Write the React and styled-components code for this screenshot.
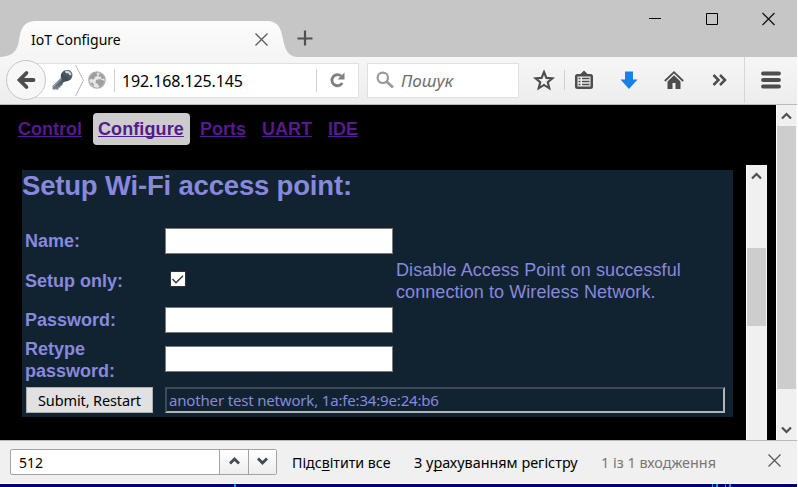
import React from 'react';
import styled, { createGlobalStyle, css } from 'styled-components';

const Global = createGlobalStyle`
  * { box-sizing: border-box; }
  body { margin: 0; background: #fff; overflow: hidden; }
`;

const ui = '"Noto Sans", "Open Sans", sans-serif';
const arial = '"Liberation Sans", Arial, sans-serif';

const Window = styled.div`
  display: flex;
  flex-direction: column;
  width: 797px;
  height: 487px;
  overflow: hidden;
`;

const TitleBar = styled.header`
  display: flex;
  height: 57px;
  background: #c6c6c6;
`;

const Tab = styled.div`
  display: grid;
  width: 297px;
  height: 57px;
  flex: none;
  > * { grid-area: 1 / 1; }
`;

const TabContent = styled.div`
  display: flex;
  align-items: center;
  justify-content: space-between;
  padding: 22px 29px 0 31px;
  height: 57px;
`;

const Label = styled.span`
  font-family: ${ui};
  font-size: ${p => p.$size || 14}px;
  font-weight: 400;
  letter-spacing: ${p => p.$spacing || 0}px;
  font-style: ${p => (p.$italic ? 'italic' : 'normal')};
  color: ${p => p.$color || '#000'};
  padding-top: ${p => p.$drop || 0}px;
  white-space: pre;
  line-height: 20px;
  u { text-decoration: underline; text-underline-offset: 2px; text-decoration-skip-ink: none; }
`;

const NewTab = styled.div`
  padding: 30px 0 0 0;
  flex: 1;
`;

const WindowControls = styled.div`
  display: flex;
  gap: 43px;
  padding: 12px 21px 0 0;
`;

const Icon = styled.svg`
  display: block;
  flex: none;
`;

const Toolbar = styled.nav`
  display: flex;
  align-items: center;
  height: 48px;
  padding: 0 0 1px 6px;
  background: linear-gradient(#f6f6f6, #ededed);
  border-bottom: 1px solid #bababa;
`;

const BackButton = styled.div`
  display: grid;
  place-items: center;
  flex: none;
  width: 40px;
  height: 40px;
  border: 1px solid #c6c6c6;
  border-radius: 50%;
  background: #f7f7f7;
  z-index: 1;
`;

const AddressBar = styled.div`
  display: flex;
  align-items: center;
  flex: none;
  width: 333px;
  height: 35px;
  margin-left: -20px;
  padding-left: 25px;
  background: #fff;
  border: 1px solid #e0e0e0;
`;

const Divider = styled.span`
  flex: none;
  width: 1px;
  height: ${p => p.$h}px;
  background: ${p => p.$color || '#cfcfcf'};
  margin: 0 ${p => p.$right || 0}px 0 ${p => p.$left || 0}px;
`;

const SearchBox = styled(AddressBar)`
  width: 152px;
  margin-left: 8px;
  padding-left: 8px;
  gap: 7px;
`;

const ToolSlot = styled.div`
  display: grid;
  place-items: center;
  flex: none;
  width: ${p => p.$w}px;
  height: 46px;
  padding-left: ${p => p.$shift || 0}px;
`;

const Content = styled.main`
  display: flex;
  height: 335px;
  background: #000;
`;

const Page = styled.div`
  flex: 1;
  display: flex;
  flex-direction: column;
`;

const Nav = styled.nav`
  display: flex;
  gap: 6px;
  height: 60px;
  padding: 8px 0 0 13px;
`;

const NavLink = styled.a`
  height: 32px;
  padding: 0 5px;
  border-radius: 4px;
  font: bold 18px/32px ${arial};
  color: #551a8b;
  text-decoration: underline;
  text-decoration-skip-ink: none;
  ${p => p.$active && css`
    margin-right: -1px;
    padding-right: 6px;
    background: #ccc;
    letter-spacing: 0.1px;
  `}
`;

const Frame = styled.section`
  display: flex;
  justify-content: space-between;
  flex: 1;
  padding: 0 9px 0 22px;
`;

const Panel = styled.div`
  width: 711px;
  height: 247px;
  margin-top: 5px;
  background: #112231;
  color: #8888dd;
`;

const Heading = styled.h1`
  margin: 0;
  height: 56px;
  font: bold 27.5px/31px ${arial};
  letter-spacing: -0.18px;
`;

const FormGrid = styled.div`
  display: grid;
  grid-template-columns: 140px 231px 1fr;
  grid-template-rows: 30px 50px 28px 50px 32px;
  align-items: center;
  padding-left: 3px;
`;

const FieldLabel = styled.label`
  grid-column: 1;
  font: bold 18px/22px ${arial};
  padding-top: ${p => p.$drop || 0}px;
`;

const Field = styled.div`
  width: 228px;
  height: 26px;
  background: #fff;
  border: 1px solid #7a7a7a;
`;

const Checkbox = styled.div`
  width: 16px;
  height: 16px;
  margin: -4px 0 0 5px;
  background: #fff;
  border: 1px solid #333;
`;

const Hint = styled.p`
  margin: 0;
  font: 18px/22px ${arial};
  letter-spacing: 0.08px;
  white-space: pre;
`;

const Submit = styled.div`
  display: grid;
  place-items: center;
  grid-column: 1;
  width: 127px;
  height: 26px;
  margin-left: 1px;
  background: #e1e1e1;
  border: 1px solid #adadad;
`;

const Output = styled.div`
  display: flex;
  align-items: center;
  grid-column: 2 / 4;
  width: 560px;
  height: 26px;
  padding-left: 2px;
  border: 2px solid;
  border-color: #3e4a57 #b0b5b9 #b0b5b9 #3e4a57;
`;

const ScrollBar = styled.div`
  display: flex;
  flex-direction: column;
  flex: none;
  align-items: center;
  width: 21px;
  background: #f0f0f0;
  border-left: 1px solid #fff;
  border-right: 1px solid #f6f6f6;
`;

const ScrollArrow = styled.div`
  display: grid;
  place-items: center;
  height: 21px;
`;

const Thumb = styled.div`
  width: 19px;
  height: ${p => p.$h}px;
  margin: ${p => p.$top || 0}px 0 auto;
  background: #cdcdcd;
`;

const FindBar = styled.footer`
  display: flex;
  align-items: center;
  height: 43px;
  padding-left: 10px;
  background: #f0f0f0;
  border-top: 1px solid #b8b8b8;
`;

const FindGroup = styled.div`
  display: flex;
  flex: none;
  width: 267px;
  height: 26px;
  margin-right: 15px;
  border: 1px solid #a3a3a3;
  border-radius: 2px;
  background: #fff;
`;

const FindInput = styled.div`
  display: flex;
  align-items: center;
  flex: 1;
  padding-left: 8px;
`;

const FindStep = styled.div`
  display: grid;
  place-items: center;
  width: ${p => p.$w}px;
  padding-bottom: 2px;
  border-left: 1px solid #a3a3a3;
  background: linear-gradient(#fff, #ededed);
`;

const FindItem = styled.div`
  flex: none;
  width: ${p => p.$w}px;
  padding-top: 2px;
`;

const FindClose = styled.div`
  padding-bottom: 3px;
`;

const Backdrop = styled.div`
  display: flex;
  height: 4px;
  border-top: 1px solid #fff;
  background: #00006c;
`;

const Speck = styled.i`
  width: ${p => p.$w}px;
  height: 3px;
  margin-left: ${p => p.$gap}px;
  background: #00a6b8;
`;

const Cross = ({ size = 13 }) => (
  <Icon width={size} height={size} viewBox="0 0 13 13">
    <path d="M.5.5l12 12M12.5.5l-12 12" stroke="#5a5a5a" strokeWidth="1.3" fill="none" />
  </Icon>
);

const Chevron = ({ down, color = '#505050', w = 2.2 }) => (
  <Icon width="11" height="8" viewBox="0 0 11 8">
    <path d={down ? 'M1 1.5l4.5 4.5L10 1.5' : 'M1 6.5L5.5 2 10 6.5'} stroke={color} strokeWidth={w} fill="none" />
  </Icon>
);

const links = ['Control', 'Configure', 'Ports', 'UART', 'IDE'];

export default function App() {
  return (
    <Window>
      <Global />
      <TitleBar>
        <Tab>
          <Icon width="297" height="57" viewBox="0 0 297 57">
            <defs>
              <linearGradient id="tab" x1="0" y1="0" x2="0" y2="1">
                <stop offset="0" stopColor="#fcfcfc" />
                <stop offset="1" stopColor="#f5f5f5" />
              </linearGradient>
            </defs>
            <path d="M0 57C13 56 17 51 19 41C21 28 23 21 38 21H266C279 21 281 29 283 39C285 50 288 56 297 57Z" fill="url(#tab)" />
          </Icon>
          <TabContent>
            <Label $drop={1}>IoT Configure</Label>
            <Cross />
          </TabContent>
        </Tab>
        <NewTab>
          <Icon width="16" height="16" viewBox="0 0 16 16">
            <path d="M8 .5v15M.5 8.5h15" stroke="#505050" strokeWidth="2.2" />
          </Icon>
        </NewTab>
        <WindowControls>
          <Icon width="13" height="13" viewBox="0 0 13 13">
            <path d="M0 6.5h12" stroke="#000" />
          </Icon>
          <Icon width="13" height="13" viewBox="0 0 13 13">
            <path d="M1.5 1.5h11v11h-11z" stroke="#000" fill="none" />
          </Icon>
          <Icon width="15" height="14" viewBox="0 0 15 14">
            <path d="M1.5 1l12 12M13.5 1l-12 12" stroke="#111" strokeWidth="1.2" />
          </Icon>
        </WindowControls>
      </TitleBar>

      <Toolbar>
        <BackButton>
          <Icon width="20" height="20" viewBox="0 0 20 20">
            <path d="M10.5 3L3.5 10l7 7M4 10h13.5" stroke="#4d4d4d" strokeWidth="3.8" strokeLinecap="round" fill="none" />
          </Icon>
        </BackButton>
        <AddressBar>
          <Icon width="22" height="22" viewBox="0 0 22 22">
            <defs>
              <linearGradient id="key" x1="0" y1="1" x2="1" y2="0">
                <stop offset="0" stopColor="#7d8d98" />
                <stop offset=".6" stopColor="#3c4a56" />
                <stop offset="1" stopColor="#6b7780" />
              </linearGradient>
            </defs>
            <path d="M10 3.5C12 .5 17 .3 19 2.5C21.5 5 20.5 9 18 11C16 12.5 14 12 12 13L10.5 14.5V16.5H8.5V18.5H6.5V20.5H.5V17L9 9C8.5 7 8.8 5 10 3.5Z" fill="url(#key)" />
            <path d="M13.5 3.5C15 2 18 3.5 18.5 6" stroke="#d7dcdf" strokeWidth="2" fill="none" />
            <path d="M1.5 17.5L9.5 10" stroke="#a5b0b8" />
          </Icon>
          <Icon width="13" height="33" viewBox="0 0 13 33">
            <path d="M1.5 1L9.5 16.5 1.5 32" stroke="#b5b5b5" fill="none" />
          </Icon>
          <Icon width="20" height="20" viewBox="0 0 20 20">
            <circle cx="10" cy="10" r="8.2" fill="#e6e6e6" stroke="#b2b2b2" strokeWidth="1.3" />
            <path d="M3 6L6 2.5 11 2 9.500 4 11 5.500 8 7 7 9.500 4 9 2 10ZM12.500 3l3 1.500 2.500 4-3 .5-1.500-2.500-2 .5ZM9 10l4-1 4.500 2-1.500 4-3.500 2.500-1.500-3.500-2.500-1ZM3 12.500l3 .5 1.500 2.500-2 .5Z" fill="#a0a0a0" />
          </Icon>
          <Divider $h={23} $left={7} $right={7} />
          <Label $size={16} $spacing={-0.12} $drop={2}>192.168.125.145</Label>
          <Divider $h={23} $left={73} $right={12} />
          <Icon width="17" height="18" viewBox="0 0 17 18">
            <path d="M13.2 12A5.5 5.5 0 1 1 12 5" stroke="#808080" strokeWidth="2.8" fill="none" />
            <path d="M15.5 1.5V8.5H8.5Z" fill="#808080" />
          </Icon>
        </AddressBar>
        <SearchBox>
          <Icon width="18" height="18" viewBox="0 0 18 18">
            <circle cx="6.8" cy="6.8" r="5.2" stroke="#999" strokeWidth="2.2" fill="none" />
            <path d="M10.5 10.5l6.5 6" stroke="#999" strokeWidth="2.8" />
          </Icon>
          <Label $size={17} $italic $color="#6d6d6d" $drop={1}>Пошук</Label>
        </SearchBox>
        <ToolSlot $w={45} $shift={4}>
          <Icon width="22" height="22" viewBox="0 0 22 22">
            <path d="M11 3l2.400 5.900 6 .4-4.600 3.900 1.500 6.100-5.300-3.400-5.300 3.400 1.500-6.100-4.600-3.900 6-.4Z" stroke="#4d4d4d" strokeWidth="2.1" fill="none" />
          </Icon>
        </ToolSlot>
        <Divider $h={20} />
        <ToolSlot $w={37}>
          <Icon width="20" height="20" viewBox="0 0 20 20">
            <path d="M10 .5L13.5 4H16.5Q19 4 19 6.5V16.5Q19 19 16.5 19H3.5Q1 19 1 16.5V6.5Q1 4 3.5 4H6.5Z" fill="#4d4d4d" />
            <path d="M3.500 6.500h13v10h-13z" fill="#f2f2f2" />
            <path d="M4.500 8.500h2M8 8.500h7.500M4.500 11.500h2M8 11.500h7.500M4.500 14.500h2M8 14.500h7.500" stroke="#4d4d4d" strokeWidth="1.5" />
          </Icon>
        </ToolSlot>
        <ToolSlot $w={53}>
          <Icon width="18" height="20" viewBox="0 0 18 20">
            <path d="M5 1.5h8v8h4.5L9 19 .5 9.5H5Z" fill="#1a80e6" />
          </Icon>
        </ToolSlot>
        <ToolSlot $w={37}>
          <Icon width="20" height="20" viewBox="0 0 20 20">
            <path d="M.8 11L10 2.2 19.2 11" stroke="#4d4d4d" strokeWidth="1.8" fill="none" />
            <path d="M3.5 11.5L10 5.3l6.5 6.2V19h-5v-6h-3v6h-5Z" fill="#4d4d4d" />
          </Icon>
        </ToolSlot>
        <ToolSlot $w={52} $shift={2}>
          <Icon width="16" height="14" viewBox="0 0 16 14">
            <path d="M2.5 2l5 5-5 5M9 2l5 5-5 5" stroke="#4d4d4d" strokeWidth="2.5" fill="none" />
          </Icon>
        </ToolSlot>
        <Divider $h={46} $color="#d6d6d6" />
        <ToolSlot $w={52}>
          <Icon width="20" height="18" viewBox="0 0 20 18">
            <path d="M2 2.5h16M2 9h16M2 15.5h16" stroke="#4d4d4d" strokeWidth="3.8" strokeLinecap="round" />
          </Icon>
        </ToolSlot>
      </Toolbar>

      <Content>
        <Page>
          <Nav>
            {links.map(name => (
              <NavLink key={name} $active={name === 'Configure'}>{name}</NavLink>
            ))}
          </Nav>
          <Frame>
            <Panel>
              <Heading>Setup Wi-Fi access point:</Heading>
              <FormGrid>
                <FieldLabel>Name:</FieldLabel>
                <Field />
                <FieldLabel>Setup only:</FieldLabel>
                <Checkbox>
                  <Icon width="14" height="14" viewBox="0 0 14 14">
                    <path d="M1.5 7l3.5 3.8L12 3.7" stroke="#333" strokeWidth="1.4" fill="none" />
                  </Icon>
                </Checkbox>
                <Hint>{'Disable Access Point on successful\nconnection to Wireless Network.'}</Hint>
                <FieldLabel>Password:</FieldLabel>
                <Field />
                <FieldLabel $drop={2}>Retype<br />password:</FieldLabel>
                <Field />
                <Submit>
                  <Label $size={14.5} $spacing={-0.12}>Submit, Restart</Label>
                </Submit>
                <Output>
                  <Label $size={15} $spacing={-0.17} $color="#8888dd">another test network, 1a:fe:34:9e:24:b6</Label>
                </Output>
              </FormGrid>
            </Panel>
            <ScrollBar>
              <ScrollArrow><Chevron /></ScrollArrow>
              <Thumb $h={78} $top={62} />
            </ScrollBar>
          </Frame>
        </Page>
        <ScrollBar>
          <ScrollArrow><Chevron /></ScrollArrow>
          <Thumb $h={263} />
          <ScrollArrow><Chevron down /></ScrollArrow>
        </ScrollBar>
      </Content>

      <FindBar>
        <FindGroup>
          <FindInput><Label $drop={1}>512</Label></FindInput>
          <FindStep $w={29}><Chevron color="#404b56" w={2.8} /></FindStep>
          <FindStep $w={28}><Chevron down color="#404b56" w={2.8} /></FindStep>
        </FindGroup>
        <FindItem $w={122}><Label $size={14.2}>Підс<u>в</u>ітити все</Label></FindItem>
        <FindItem $w={187}><Label $size={14.4}>З у<u>р</u>ахуванням регістру</Label></FindItem>
        <FindItem $w={167}><Label $size={14.4} $color="#777">1 із 1 входження</Label></FindItem>
        <FindClose><Cross /></FindClose>
      </FindBar>
      <Backdrop>
        <Speck $w={2} $gap={234} />
        <Speck $w={1} $gap={476} />
        <Speck $w={2} $gap={3} />
        <Speck $w={1} $gap={7} />
        <Speck $w={2} $gap={3} />
      </Backdrop>
    </Window>
  );
}
